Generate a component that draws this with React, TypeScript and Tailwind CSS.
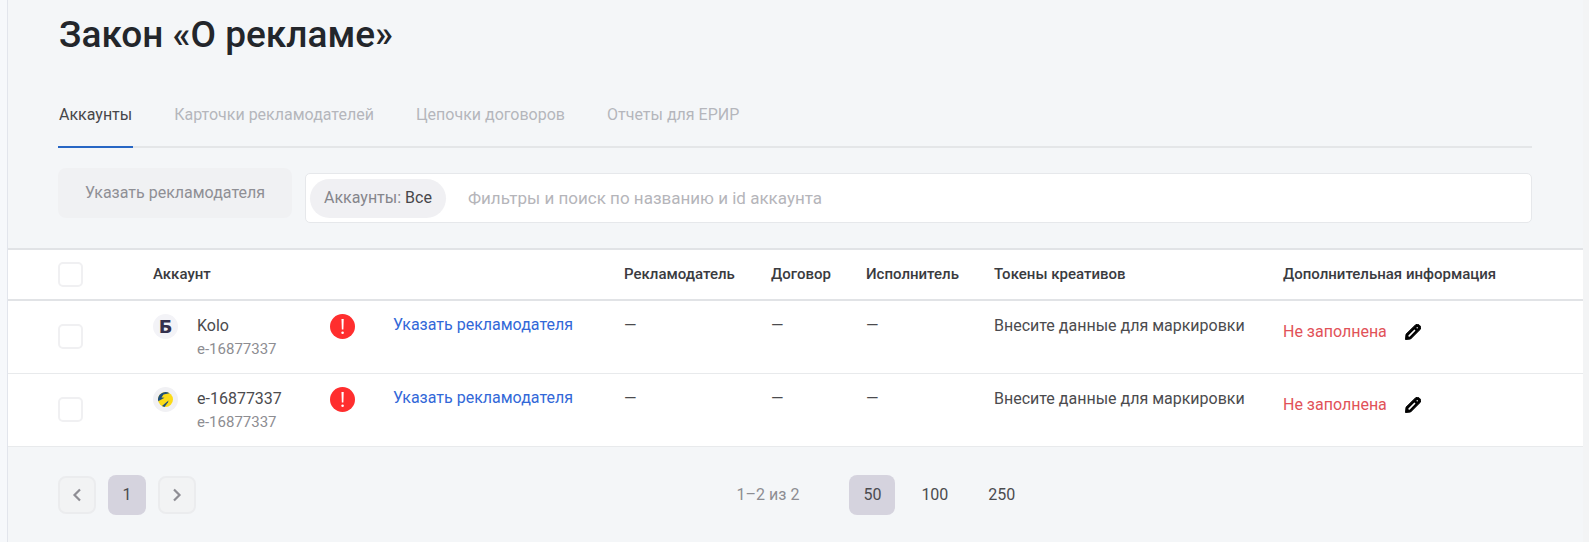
import React, { useState } from 'react';

interface Account {
  id: string;
  name: string;
  logo: React.ReactNode;
}

const tabs = ['Аккаунты', 'Карточки рекламодателей', 'Цепочки договоров', 'Отчеты для ЕРИР'];
const pageSizes = [50, 100, 250];

const BusinessLogo = () => (
  <span
    aria-hidden="true"
    className="flex size-[25px] items-center justify-center rounded-full bg-[#f3f3f7] font-['DejaVu_Sans',sans-serif] text-[18px] leading-none font-bold text-[#33304d]"
  >
    Б
  </span>
);

const ArrowLogo = () => (
  <svg viewBox="0 0 25 25" className="size-[25px]" aria-hidden="true">
    <circle cx="12.5" cy="12.5" r="12.5" fill="#f1f1f4" />
    <circle cx="12.5" cy="12.5" r="7.5" fill="#fbdb17" />
    <path d="M5.2 14.2A7.5 7.5 0 0 1 16.5 6.2L10.5 7.5 8.500 10.500 11.500 10.800z" fill="#1f4f7d" />
    <path d="M15.500 13.500l-.5 1.800-3.500 4.600a7.500 7.500 0 0 1-2.500-.8z" fill="#1f4f7d" />
  </svg>
);

const AlertIcon = () => (
  <svg viewBox="0 0 25 25" className="size-[25px]" role="img" aria-label="Ошибка">
    <circle cx="12.5" cy="12.5" r="12.5" fill="#ff2e2e" />
    <path d="M11.5 5h2.2l-.3 10.5h-1.6z" fill="#fff" />
    <circle cx="12.6" cy="18.8" r="1.3" fill="#fff" />
  </svg>
);

const PencilIcon = () => (
  <svg viewBox="0 0 16 16" className="size-4" aria-hidden="true">
    <path d="M.5 15.5l.5-5.300L10.200 1.200a3 3 0 0 1 4.200 0l.4.4a3 3 0 0 1 0 4.200L5.600 15z" fill="#000" stroke="#000" strokeWidth="1" strokeLinejoin="round" />
    <path d="M4.200 11.800l5.300-5.300" stroke="#fff" strokeWidth="1.700" strokeLinecap="round" />
    <circle cx="12.2" cy="3.800" r=".7" fill="#fff" />
  </svg>
);

const Chevron = ({ d }: { d: string }) => (
  <svg viewBox="0 0 12 14" className="h-3.5 w-3" fill="none" stroke="#8e8d94" strokeWidth="2.2" aria-hidden="true">
    <path d={d} />
  </svg>
);

const Checkbox = ({ label }: { label: string }) => (
  <input
    type="checkbox"
    aria-label={label}
    className="block size-[25px] appearance-none rounded-[5px] border-2 border-[#f0f0f2] bg-white checked:bg-[#2b63c9]"
  />
);

const accounts: Account[] = [
  { id: 'e-16877337', name: 'Kolo', logo: <BusinessLogo /> },
  { id: 'e-16877337', name: 'e-16877337', logo: <ArrowLogo /> },
];

const App: React.FC = () => {
  const [tab, setTab] = useState(tabs[0]);
  const [pageSize, setPageSize] = useState(50);

  return (
    <div className="flex min-h-screen bg-[#f4f6f8] font-[Roboto,sans-serif] text-base text-[#4b4b4e]">
      <div className="w-[7px] shrink-0 bg-[#f6f8fb]" />
      <main className="min-w-0 flex-1 border-l border-[#e2e5ec]">
        <header className="pr-[51px] pl-[50px]">
          <h1 className="px-px pt-3 text-[37px] leading-[46px] font-medium text-[#23262b]">Закон «О рекламе»</h1>
          <nav className="mt-[31px] flex gap-10 border-b-2 border-[#e4e6e8]">
            {tabs.map((name) => (
              <button
                key={name}
                type="button"
                onClick={() => setTab(name)}
                className={
                  name === tab
                    ? '-mb-0.5 border-b-2 border-[#2766c4] px-px pt-3.5 pb-[19px] leading-6 text-[#47474a]'
                    : '-mb-0.5 border-b-2 border-transparent px-px pt-3.5 pb-[19px] leading-6 text-[#b5b6bc]'
                }
              >
                {name}
              </button>
            ))}
          </nav>
          <div className="flex items-start gap-[13px] pt-5 pb-[25px]">
            <button type="button" className="h-[50px] shrink-0 rounded-lg bg-[#f0f1f3] px-[27px] text-[#8f8f95]">
              Указать рекламодателя
            </button>
            <div className="mt-[5px] flex h-[50px] flex-1 items-center rounded-[5px] border border-[#e6e8eb] bg-white pl-1">
              <button type="button" className="h-[39px] shrink-0 rounded-full bg-[#f0f0f3] px-3.5 text-[#85858b]">
                Аккаунты: <span className="text-[#47474a]">Все</span>
              </button>
              <input
                type="text"
                aria-label="Фильтры и поиск"
                placeholder="Фильтры и поиск по названию и id аккаунта"
                className="ml-[22px] h-10 flex-1 bg-transparent text-[17px] outline-none placeholder:text-[#b5b5ba]"
              />
            </div>
          </div>
        </header>

        <table className="w-full table-fixed border-separate border-spacing-0 bg-white text-left">
          <colgroup>
            <col className="w-[89px]" />
            <col className="w-[220px]" />
            <col className="w-[49px]" />
            <col className="w-[245px]" />
            <col className="w-[147px]" />
            <col className="w-[95px]" />
            <col className="w-[128px]" />
            <col className="w-[289px]" />
            <col />
          </colgroup>
          <thead>
            <tr className="h-[53px] text-[15px] text-[#3a3b3f] [&>th]:border-y-2 [&>th]:border-[#e1e3e6] [&>th]:p-0 [&>th]:pl-[13px] [&>th]:font-medium">
              <th scope="col">
                <div className="pl-[37px]">
                  <Checkbox label="Выбрать все" />
                </div>
              </th>
              <th scope="col">
                <div className="pl-[43px]">Аккаунт</div>
              </th>
              <th />
              <th />
              <th scope="col">Рекламодатель</th>
              <th scope="col">Договор</th>
              <th scope="col">Исполнитель</th>
              <th scope="col">Токены креативов</th>
              <th scope="col">Дополнительная информация</th>
            </tr>
          </thead>
          <tbody>
            {accounts.map((account) => (
              <tr
                key={account.name}
                className="h-[73px] [&>td]:border-b [&>td]:border-[#e8eaec] [&>td]:py-0 [&>td]:pr-0 [&>td]:pl-[13px]"
              >
                <td>
                  <div className="pb-0.5 pl-[37px]">
                    <Checkbox label={account.name} />
                  </div>
                </td>
                <td className="align-top">
                  <div className="flex gap-[19px] pt-[13px] pl-[43px]">
                    {account.logo}
                    <div>
                      <div className="leading-6">{account.name}</div>
                      <div className="text-[15px] leading-[22px] text-[#8d8d92]">{account.id}</div>
                    </div>
                  </div>
                </td>
                <td className="align-top">
                  <div className="pt-[13px]">
                    <AlertIcon />
                  </div>
                </td>
                <td className="align-top">
                  <div className="pt-3 pl-3.5 leading-6">
                    <a href="#" className="text-[#3268d8]">Указать рекламодателя</a>
                  </div>
                </td>
                <td className="align-top"><div className="pt-[13px] leading-6">—</div></td>
                <td className="align-top"><div className="pt-[13px] leading-6">—</div></td>
                <td className="align-top"><div className="pt-[13px] leading-6">—</div></td>
                <td className="align-top"><div className="pt-[13px] leading-6">Внесите данные для маркировки</div></td>
                <td className="align-top">
                  <div className="flex items-center gap-[18px] pt-[19px] leading-6 text-[#e15258]">
                    Не заполнена
                    <button type="button" aria-label="Редактировать">
                      <PencilIcon />
                    </button>
                  </div>
                </td>
              </tr>
            ))}
          </tbody>
        </table>

        <footer className="grid grid-cols-[1fr_auto_1fr] items-center pt-7 pr-[105px] pb-6 pl-[50px]">
          <div className="flex items-center gap-3">
            <button type="button" aria-label="Назад" className="flex h-[38px] w-[38px] items-center justify-center rounded-lg border-2 border-[#ebecee] bg-[#f2f3f4]">
              <Chevron d="M9 1.5L3.5 7L9 12.5" />
            </button>
            <button type="button" className="h-10 w-[38px] rounded-lg bg-[#d5d3de]">1</button>
            <button type="button" aria-label="Вперед" className="flex h-[38px] w-[38px] items-center justify-center rounded-lg border-2 border-[#ebecee] bg-[#f2f3f4]">
              <Chevron d="M3 1.5L8.5 7L3 12.5" />
            </button>
          </div>
          <div className="text-[#8d8d92]">1–2 из 2</div>
          <div className="flex items-center pl-[50px]">
            {pageSizes.map((size) => (
              <button
                key={size}
                type="button"
                onClick={() => setPageSize(size)}
                className={size === pageSize ? 'mr-3 h-10 rounded-lg bg-[#d5d3de] px-3.5' : 'mr-3 h-10 rounded-lg px-3.5'}
              >
                {size}
              </button>
            ))}
          </div>
        </footer>
      </main>
      <div className="w-1.5 shrink-0 bg-[#f3f4f5]" />
    </div>
  );
};

export default App;
